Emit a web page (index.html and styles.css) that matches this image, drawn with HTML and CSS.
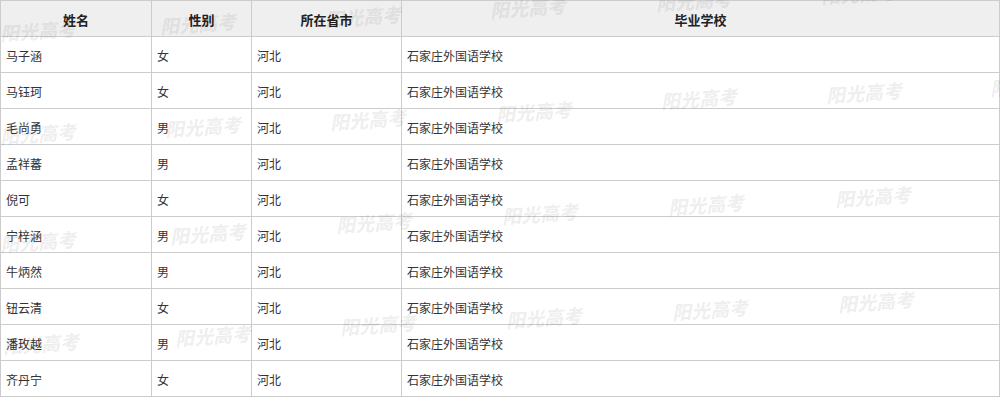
FILE: index.html
```html
<!DOCTYPE html>
<html lang="zh-CN">
<head>
<meta charset="utf-8">
<title>名单</title>
<link rel="stylesheet" href="styles.css">
</head>
<body>
<div class="wrap">
  <table class="list">
    <colgroup>
      <col class="c-name"><col class="c-sex"><col class="c-prov"><col class="c-school">
    </colgroup>
    <thead>
      <tr><th>姓名</th><th>性别</th><th>所在省市</th><th>毕业学校</th></tr>
    </thead>
    <tbody>
      <tr><td>马子涵</td><td>女</td><td>河北</td><td>石家庄外国语学校</td></tr>
      <tr><td>马钰珂</td><td>女</td><td>河北</td><td>石家庄外国语学校</td></tr>
      <tr><td>毛尚勇</td><td>男</td><td>河北</td><td>石家庄外国语学校</td></tr>
      <tr><td>孟祥蕃</td><td>男</td><td>河北</td><td>石家庄外国语学校</td></tr>
      <tr><td>倪可</td><td>女</td><td>河北</td><td>石家庄外国语学校</td></tr>
      <tr><td>宁梓涵</td><td>男</td><td>河北</td><td>石家庄外国语学校</td></tr>
      <tr><td>牛炳然</td><td>男</td><td>河北</td><td>石家庄外国语学校</td></tr>
      <tr><td>钮云清</td><td>女</td><td>河北</td><td>石家庄外国语学校</td></tr>
      <tr><td>潘玫越</td><td>男</td><td>河北</td><td>石家庄外国语学校</td></tr>
      <tr><td>齐丹宁</td><td>女</td><td>河北</td><td>石家庄外国语学校</td></tr>
    </tbody>
  </table>
  <div class="marks">
    <span class="wm" style="left:0px;top:23px">阳光高考</span>
    <span class="wm" style="left:160px;top:16px">阳光高考</span>
    <span class="wm" style="left:325px;top:9px">阳光高考</span>
    <span class="wm" style="left:490px;top:0px">阳光高考</span>
    <span class="wm" style="left:656px;top:-7px">阳光高考</span>
    <span class="wm" style="left:821px;top:-14px">阳光高考</span>

    <span class="wm" style="left:0px;top:126px">阳光高考</span>
    <span class="wm" style="left:165px;top:119px">阳光高考</span>
    <span class="wm" style="left:330px;top:112px">阳光高考</span>
    <span class="wm" style="left:496px;top:104px">阳光高考</span>
    <span class="wm" style="left:661px;top:91px">阳光高考</span>
    <span class="wm" style="left:826px;top:85px">阳光高考</span>
    <span class="wm" style="left:990px;top:78px">阳光高考</span>

    <span class="wm" style="left:0px;top:234px">阳光高考</span>
    <span class="wm" style="left:170px;top:226px">阳光高考</span>
    <span class="wm" style="left:336px;top:215px">阳光高考</span>
    <span class="wm" style="left:502px;top:206px">阳光高考</span>
    <span class="wm" style="left:668px;top:197px">阳光高考</span>
    <span class="wm" style="left:835px;top:189px">阳光高考</span>

    <span class="wm" style="left:3px;top:336px">阳光高考</span>
    <span class="wm" style="left:175px;top:328px">阳光高考</span>
    <span class="wm" style="left:340px;top:317px">阳光高考</span>
    <span class="wm" style="left:506px;top:310px">阳光高考</span>
    <span class="wm" style="left:672px;top:302px">阳光高考</span>
    <span class="wm" style="left:838px;top:294px">阳光高考</span>
  </div>
</div>
</body>
</html>
```
FILE: styles.css
```css
html, body {
  margin: 0;
  padding: 0;
  background: #ffffff;
}

body {
  font-family: "Noto Sans CJK SC", "Liberation Sans", sans-serif;
  color: #333333;
}

.wrap {
  position: relative;
  width: 1000px;
  height: 411px;
  overflow: hidden;
}

.list {
  border-collapse: collapse;
  width: 999px;
  table-layout: fixed;
  font-size: 12px;
}

.c-name { width: 151px; }
.c-sex { width: 100px; }
.c-prov { width: 150px; }
.c-school { width: 598px; }

.list th,
.list td {
  border: 1px solid #cccccc;
  height: 36px;
  box-sizing: border-box;
  padding: 3px 5px 0 5px;
  line-height: 16px;
  vertical-align: middle;
}

.list th {
  background: #efefef;
  font-size: 13px;
  font-weight: bold;
  text-align: center;
  color: #222222;
}

.list td {
  text-align: left;
}

.marks {
  position: absolute;
  left: 0;
  top: 0;
  right: 0;
  bottom: 0;
  pointer-events: none;
}

.wm {
  position: absolute;
  font-family: "Noto Sans CJK SC", sans-serif;
  font-size: 19px;
  font-weight: 900;
  font-style: italic;
  line-height: 1;
  white-space: nowrap;
  color: rgba(0, 0, 0, 0.07);
  transform: rotate(-4deg);
  transform-origin: left center;
}
```
